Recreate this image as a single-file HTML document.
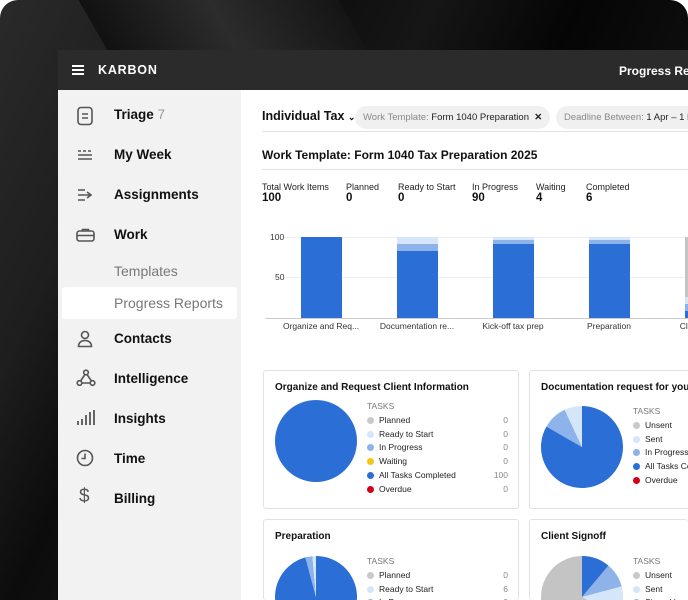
<!DOCTYPE html>
<html><head><style>
*{margin:0;padding:0;box-sizing:border-box}
html,body{width:688px;height:600px;overflow:hidden;background:#fff;font-family:"Liberation Sans",sans-serif}
#wrap{position:relative;width:688px;height:600px;overflow:hidden}
.bg{position:absolute;left:0;top:0;width:688px;height:600px;border-radius:18px 18px 0 0;overflow:hidden;
background:linear-gradient(115deg,#2a2a2a 0%,#1e1e1e 18%,#0c0c0c 30%,#161616 45%,#050505 60%,#111 80%,#1a1a1a 100%)}
.bg:before{content:"";position:absolute;left:90px;top:-20px;width:260px;height:80px;background:linear-gradient(90deg,#111,#2c2c2c,#151515);transform:skewX(30deg)}
.app{position:absolute;left:58px;top:50px;width:630px;height:550px;background:#fff;overflow:hidden}
.hdr{height:40px;background:#2b2b2b;color:#fff;position:relative}
.hdr .ham{position:absolute;left:14px;top:15px;width:12px;height:10px;border-top:2px solid #fff;border-bottom:2px solid #fff}
.hdr .ham:after{content:"";position:absolute;left:0;top:2px;width:12px;height:2px;background:#fff}
.hdr .logo{position:absolute;left:40px;top:13px;font-size:12.5px;font-weight:bold;letter-spacing:.8px}
.hdr .pr{position:absolute;left:561px;top:14px;font-size:12px;font-weight:bold;white-space:nowrap}
.side{position:absolute;left:0;top:40px;width:183px;height:510px;background:#f2f2f2}
.nav{position:absolute;left:56px;font-size:13.5px;color:#111;font-weight:bold;white-space:nowrap}
.sub{position:absolute;left:56px;font-size:14px;color:#777;white-space:nowrap}
.sel{position:absolute;left:4px;top:197px;width:175px;height:32px;background:#fff;border-radius:3px}
.ic{position:absolute;left:18px}
.main{position:absolute;left:183px;top:40px;width:447px;height:510px;overflow:hidden}
.t{position:absolute;white-space:nowrap}
.chip{position:absolute;top:16px;height:23px;border-radius:12px;background:#f0f0f0;font-size:9.5px;color:#888;padding:6px 8px;white-space:nowrap}
.chip b{color:#222;font-weight:normal}
.hl{position:absolute;left:21px;height:1px;background:#e2e2e2;width:440px}
.sl{font-size:9px;color:#222}
.sv{font-size:11.5px;font-weight:bold;color:#111}
.grid{position:absolute;left:44px;width:420px;height:1px;background:#eee}
.bar{position:absolute;width:41px}
.xl{position:absolute;top:231px;font-size:8.5px;color:#333;width:90px;text-align:center;white-space:nowrap}
.card{position:absolute;border:1px solid #e2e2e2;border-radius:3px;background:#fff;overflow:hidden}
.ct{position:absolute;left:11px;top:11px;font-size:10px;font-weight:bold;color:#111;white-space:nowrap}
.lg{position:absolute;font-size:8.5px;color:#222}
.lg div{height:13.8px;position:relative;padding-left:12px;white-space:nowrap}
.lg div i{position:absolute;left:0;top:2px;width:7px;height:7px;border-radius:50%}
.lg div span{position:absolute;right:0;color:#888}
.lg .h{padding-left:0;color:#777}
</style></head><body><div id="wrap">
<div class="bg"></div>
<div class="app">
<div class="hdr"><div class="ham"></div><div class="logo">KARBON</div><div class="pr">Progress Reports</div></div>
<div class="side">
<div class="sel"></div>
<svg class="ic" style="top:16px" width="18" height="20" viewBox="0 0 18 20" fill="none" stroke="#555" stroke-width="1.6"><rect x="2" y="1.5" width="14" height="17" rx="3"/><path d="M6 8h6M6 12h6"/></svg>
<div class="nav" style="top:17px">Triage <span style="color:#999;font-weight:normal">7</span></div>
<svg class="ic" style="top:59px" width="18" height="12" fill="none" stroke="#555" stroke-width="1.6"><path d="M2 2h3M7 2h3M12 2h3M2 6h14M2 10h14"/></svg>
<div class="nav" style="top:57px">My Week</div>
<svg class="ic" style="top:98px" width="18" height="14" fill="none" stroke="#555" stroke-width="1.6"><path d="M2 2h7M2 7h13M2 12h7M11 4l4 3-4 3"/></svg>
<div class="nav" style="top:97px">Assignments</div>
<svg class="ic" style="top:138px" width="20" height="14" fill="none" stroke="#555" stroke-width="1.6"><rect x="1" y="3" width="17" height="10" rx="2.5"/><path d="M6.5 3V1.5h6V3M1 7.5h17"/></svg>
<div class="nav" style="top:137px">Work</div>
<div class="sub" style="top:173px">Templates</div>
<div class="sub" style="top:205px">Progress Reports</div>
<svg class="ic" style="top:240px" width="18" height="18" fill="none" stroke="#555" stroke-width="1.6"><circle cx="9" cy="5" r="3.5"/><path d="M2.5 16.5c0-4 3-6 6.5-6s6.5 2 6.5 6z"/></svg>
<div class="nav" style="top:241px">Contacts</div>
<svg class="ic" style="top:279px" width="20" height="18" fill="none" stroke="#555" stroke-width="1.6"><circle cx="10" cy="3.5" r="2.3"/><circle cx="3.5" cy="14" r="2.3"/><circle cx="16.5" cy="14" r="2.3"/><path d="M9 5.5L4.5 12M11 5.5l4.5 6.5M6 14h8"/></svg>
<div class="nav" style="top:281px">Intelligence</div>
<svg class="ic" style="top:319px" width="20" height="18" fill="none" stroke="#555" stroke-width="1.8"><path d="M2 16v-4M6 16v-6M10 16V6M14 16V3M18 16V1"/></svg>
<div class="nav" style="top:321px">Insights</div>
<svg class="ic" style="top:359px" width="18" height="18" fill="none" stroke="#555" stroke-width="1.6"><circle cx="9" cy="9" r="7.5"/><path d="M9 4.5V9.5H5.5"/></svg>
<div class="nav" style="top:361px">Time</div>
<div class="ic" style="top:396px;left:21px;font-size:19px;color:#555">$</div>
<div class="nav" style="top:401px">Billing</div>
</div>
<div class="main">
<div class="t" style="left:21px;top:19px;font-size:12.5px;font-weight:bold;color:#111">Individual Tax <span style="font-size:9px">&#8964;</span></div>
<div class="chip" style="left:114px">Work Template: <b>Form 1040 Preparation</b> &nbsp;<b style="font-weight:bold">✕</b></div>
<div class="chip" style="left:315px">Deadline Between: <b>1 Apr – 1 Nov</b></div>
<div class="hl" style="top:41px"></div>
<div class="t" style="left:21px;top:58px;font-size:12px;font-weight:bold;color:#111">Work Template: Form 1040 Tax Preparation 2025</div>
<div class="hl" style="top:79px"></div>
<div class="t" style="left:21px;top:92px"><div class="sl">Total Work Items</div><div class="sv">100</div></div>
<div class="t" style="left:105px;top:92px"><div class="sl">Planned</div><div class="sv">0</div></div>
<div class="t" style="left:157px;top:92px"><div class="sl">Ready to Start</div><div class="sv">0</div></div>
<div class="t" style="left:231px;top:92px"><div class="sl">In Progress</div><div class="sv">90</div></div>
<div class="t" style="left:295px;top:92px"><div class="sl">Waiting</div><div class="sv">4</div></div>
<div class="t" style="left:345px;top:92px"><div class="sl">Completed</div><div class="sv">6</div></div>
<div class="t" style="left:29px;top:142px;font-size:8.5px;color:#333">100</div>
<div class="t" style="left:34px;top:182px;font-size:8.5px;color:#333">50</div>
<div class="grid" style="top:147px"></div><div class="grid" style="top:187px"></div>
<div class="grid" style="top:228px;background:#ccc;left:24px;width:440px"></div>
<div class="bar" style="left:60px;top:147px;height:81px;background:#2b6fd6"></div>
<div class="bar" style="left:156px;top:147px;height:7px;background:#d5e6fa"></div>
<div class="bar" style="left:156px;top:154px;height:7px;background:#8db3ea"></div>
<div class="bar" style="left:156px;top:161px;height:67px;background:#2b6fd6"></div>
<div class="bar" style="left:252px;top:147px;height:3px;background:#d5e6fa"></div>
<div class="bar" style="left:252px;top:150px;height:4px;background:#8db3ea"></div>
<div class="bar" style="left:252px;top:154px;height:74px;background:#2b6fd6"></div>
<div class="bar" style="left:348px;top:147px;height:3px;background:#d5e6fa"></div>
<div class="bar" style="left:348px;top:150px;height:4px;background:#8db3ea"></div>
<div class="bar" style="left:348px;top:154px;height:74px;background:#2b6fd6"></div>
<div class="bar" style="left:444px;top:147px;height:60px;background:#c4c4c4"></div>
<div class="bar" style="left:444px;top:207px;height:7px;background:#d5e6fa"></div>
<div class="bar" style="left:444px;top:214px;height:7px;background:#8db3ea"></div>
<div class="bar" style="left:444px;top:221px;height:7px;background:#2b6fd6"></div>
<div class="xl" style="left:35px">Organize and Req...</div>
<div class="xl" style="left:131px">Documentation re...</div>
<div class="xl" style="left:227px">Kick-off tax prep</div>
<div class="xl" style="left:323px">Preparation</div>
<div class="xl" style="left:419px">Client Signoff</div>
</div>
<div class="card" style="left:205px;top:320px;width:256px;height:139px">
<div class="ct">Organize and Request Client Information</div>
<svg style="position:absolute;left:10px;top:28px" width="84" height="84"><circle cx="42" cy="42" r="41" fill="#2b6fd6"/></svg>
<div class="lg" style="left:103px;top:30px;width:141px">
<div class="h">TASKS</div>
<div><i style="background:#c9c9c9"></i>Planned<span>0</span></div>
<div><i style="background:#d5e6fa"></i>Ready to Start<span>0</span></div>
<div><i style="background:#8db3ea"></i>In Progress<span>0</span></div>
<div><i style="background:#f5c518"></i>Waiting<span>0</span></div>
<div><i style="background:#2b6fd6"></i>All Tasks Completed<span>100</span></div>
<div><i style="background:#d0021b"></i>Overdue<span>0</span></div>
</div></div>
<div class="card" style="left:471px;top:320px;width:159px;height:139px;border-right:none;border-radius:3px 0 0 3px">
<div class="ct">Documentation request for your upcoming tax return</div>
<svg style="position:absolute;left:10px;top:34px" width="84" height="84"><g transform="translate(42,42)">
<path d="M0 0L0 -41A41 41 0 1 1 -35.5 -20.5Z" fill="#2b6fd6"/>
<path d="M0 0L-35.5 -20.5A41 41 0 0 1 -17.3 -37.2Z" fill="#8db3ea"/>
<path d="M0 0L-17.3 -37.2A41 41 0 0 1 0 -41Z" fill="#d5e6fa"/></g></svg>
<div class="lg" style="left:103px;top:35px;width:141px">
<div class="h">TASKS</div>
<div><i style="background:#c9c9c9"></i>Unsent</div>
<div><i style="background:#d5e6fa"></i>Sent</div>
<div><i style="background:#8db3ea"></i>In Progress</div>
<div><i style="background:#2b6fd6"></i>All Tasks Completed</div>
<div><i style="background:#d0021b"></i>Overdue</div>
</div></div>
<div class="card" style="left:205px;top:469px;width:256px;height:81px;border-bottom:none">
<div class="ct">Preparation</div>
<svg style="position:absolute;left:10px;top:35px" width="84" height="84"><g transform="translate(42,42)">
<path d="M0 0L0 -41A41 41 0 1 1 -10.6 -39.6Z" fill="#2b6fd6"/>
<path d="M0 0L-10.6 -39.6A41 41 0 0 1 -3.6 -40.8Z" fill="#8db3ea"/>
<path d="M0 0L-3.6 -40.8A41 41 0 0 1 0 -41Z" fill="#d5e6fa"/></g></svg>
<div class="lg" style="left:103px;top:36px;width:141px">
<div class="h">TASKS</div>
<div><i style="background:#c9c9c9"></i>Planned<span>0</span></div>
<div><i style="background:#d5e6fa"></i>Ready to Start<span>6</span></div>
<div><i style="background:#8db3ea"></i>In Progress<span>0</span></div>
</div></div>
<div class="card" style="left:471px;top:469px;width:159px;height:81px;border-bottom:none;border-right:none">
<div class="ct">Client Signoff</div>
<svg style="position:absolute;left:10px;top:35px" width="84" height="84"><g transform="translate(42,42)">
<circle r="41" fill="#c4c4c4"/>
<path d="M0 0L0 -41A41 41 0 0 1 26.4 -31.4Z" fill="#2b6fd6"/>
<path d="M0 0L26.4 -31.4A41 41 0 0 1 39.6 -10.6Z" fill="#8db3ea"/>
<path d="M0 0L39.6 -10.6A41 41 0 0 1 35.5 20.5Z" fill="#d5e6fa"/></g></svg>
<div class="lg" style="left:103px;top:36px;width:141px">
<div class="h">TASKS</div>
<div><i style="background:#c9c9c9"></i>Unsent</div>
<div><i style="background:#d5e6fa"></i>Sent</div>
<div><i style="background:#8db3ea"></i>Signed by</div>
</div></div>
</div>
</div></body></html>
